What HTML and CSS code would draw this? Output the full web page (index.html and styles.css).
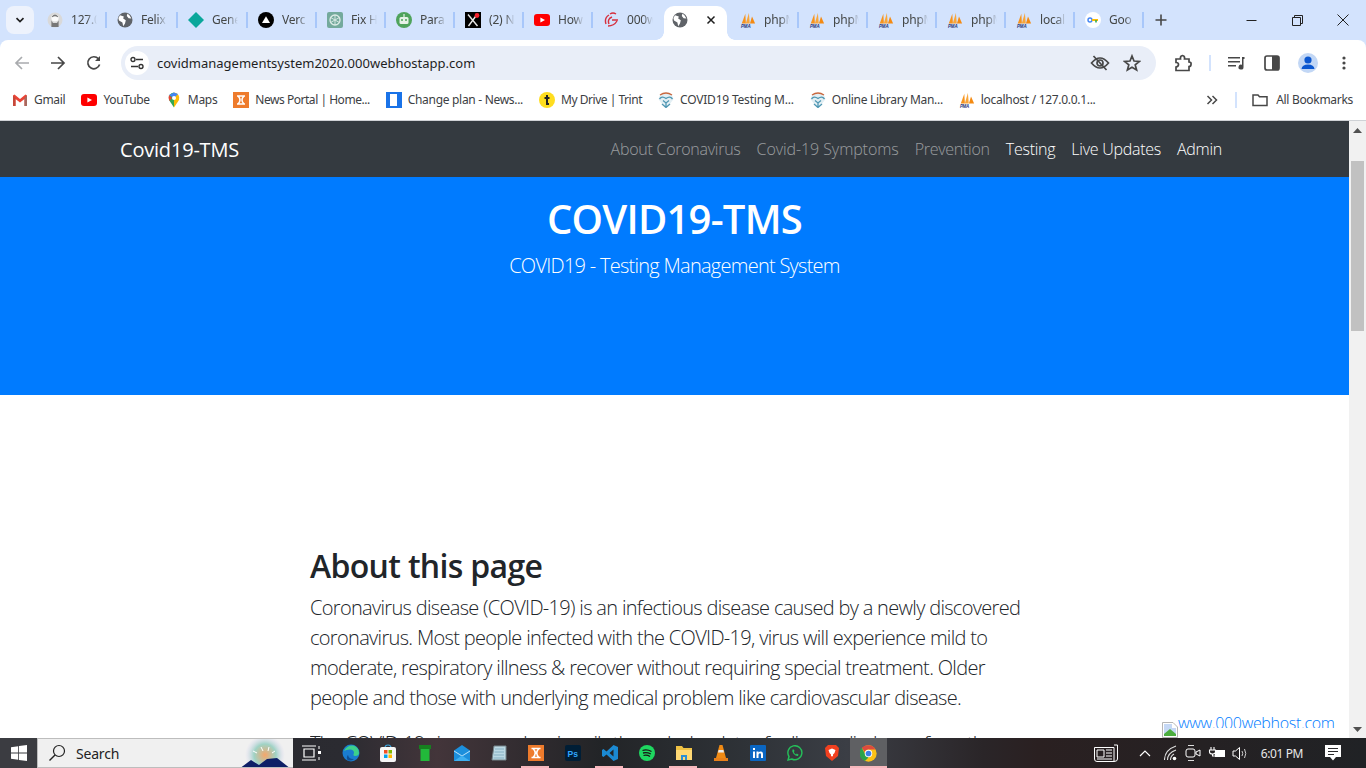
FILE: index.html
```html
<!DOCTYPE html>
<html lang="en">
<head>
<meta charset="utf-8">
<title>Covid19-TMS</title>
<link rel="stylesheet" href="styles.css">
</head>
<body>
<svg class="defs" width="0" height="0" aria-hidden="true">
  <symbol id="globe" viewBox="0 0 16 16"><circle cx="8" cy="8" r="7.500" fill="#5f6368"/><path d="M3 3.200 6.800 4.400 6.200 6.600 8.800 8.200 8 11.400 6.200 14.200 5.400 10.600 2 8.400 1.400 6Z M10.400 1.600 12.600 3.400 14.400 6.400 11.600 6.200 9.800 4Z" fill="#fff"/></symbol>
  <symbol id="pma" viewBox="0 0 18 18"><path d="M2 13 6 2 6.600 13Z" fill="#f7941d"/><path d="M6.500 13 10 1 11 13Z" fill="#f9a63a"/><path d="M11.200 13 13.500 5 17 13Z" fill="#f48a12"/><text x="1" y="17.600" class="pma-text">PMA</text></symbol>
  <symbol id="shield" viewBox="0 0 16 16"><path d="M2 3Q8 -1 14 3L15.500 7 12 12 8 16 4 12 .5 7Z" fill="#e3eff4"/><path d="M2 3Q8 -1 14 3" fill="none" stroke="#c9683f" stroke-width="1.300"/><path d="M1.500 7Q4 3.500 8 6.500Q12 3.500 14.500 7M5 8.500 8 11 11 8.500M8 11V15.500M4 12 8 15.500 12 12" fill="none" stroke="#4f97b3" stroke-width="1.300"/></symbol>
</svg>
<div class="screen">
  <header class="tabstrip">
    <button class="tab-search"><svg width="12" height="12" viewBox="0 0 12 12"><path d="M2.500 4.200 6 7.600 9.500 4.200" fill="none" stroke="#1f1f1f" stroke-width="1.700"/></svg></button>
    <div class="tabs">
      <div class="tab"><svg class="fav" viewBox="0 0 16 16"><circle cx="8" cy="8" r="7.500" fill="#d9d9d9"/><circle cx="8" cy="6" r="3.600" fill="#fbfbfb"/><path d="M4.400 15V8.500L6 11 10 11 11.600 8.500V15Z" fill="#777"/><path d="M4.800 4.400Q8 .6 11.200 4.400L10.600 5.200Q8 3.400 5.400 5.200Z" fill="#777"/></svg><span class="tab-title">127.0.0</span></div>
      <div class="tab"><svg class="fav"><use href="#globe"/></svg><span class="tab-title">Felix</span></div>
      <div class="tab"><svg class="fav" viewBox="0 0 16 16"><path d="M8 0 16 8 8 16 0 8Z" fill="#0aa79b"/></svg><span class="tab-title">Gene</span></div>
      <div class="tab"><svg class="fav" viewBox="0 0 16 16"><circle cx="8" cy="8" r="8" fill="#000"/><path d="M8 4.200 12 11H4Z" fill="#fff"/></svg><span class="tab-title">Verc</span></div>
      <div class="tab"><svg class="fav" viewBox="0 0 16 16"><rect width="16" height="16" rx="2" fill="#74aa9c"/><circle cx="8" cy="8" r="5" fill="none" stroke="#dcebe6" stroke-width="1.300"/><path d="M8 3V13M3.600 5.500 12.400 10.500M3.600 10.500 12.400 5.500" stroke="#dcebe6" stroke-width=".9"/></svg><span class="tab-title">Fix H</span></div>
      <div class="tab"><svg class="fav" viewBox="0 0 16 16"><circle cx="8" cy="8" r="8" fill="#4fa35c"/><rect x="3.500" y="5" width="9" height="7" rx="1.500" fill="#e6f2e7"/><circle cx="6" cy="8" r="1" fill="#4fa35c"/><circle cx="10" cy="8" r="1" fill="#4fa35c"/><path d="M8 5V2" stroke="#e6f2e7" stroke-width="1.200"/></svg><span class="tab-title">Para</span></div>
      <div class="tab"><svg class="fav" viewBox="0 0 16 16"><rect width="16" height="16" fill="#000"/><path d="M3 2.500 12.500 14M12 2.500 3.500 14" stroke="#e8e8e8" stroke-width="1.400"/><circle cx="12" cy="3.500" r="2.400" fill="#f4212e"/></svg><span class="tab-title">(2) New</span></div>
      <div class="tab"><svg class="fav" viewBox="0 0 16 16"><rect y="2" width="16" height="12" rx="3" fill="#f00"/><path d="M6.400 5.400 11 8 6.400 10.600Z" fill="#fff"/></svg><span class="tab-title">How</span></div>
      <div class="tab"><svg class="fav" viewBox="0 0 16 16"><path d="M3 12Q1 6 6 3M6 12Q4 7 9 5M5 14Q11 14 14 9M7 2Q10 0 13 2M9 8H15" fill="none" stroke="#d6303e" stroke-width="1.400"/></svg><span class="tab-title">000web</span></div>
      <div class="tab tab-active"><svg class="fav"><use href="#globe"/></svg><svg class="tab-close" width="10" height="10" viewBox="0 0 10 10"><path d="M1.500 1.500 8.500 8.500M8.500 1.500 1.500 8.500" stroke="#1f1f1f" stroke-width="1.500"/></svg></div>
      <div class="tab"><svg class="fav"><use href="#pma"/></svg><span class="tab-title">phpMy</span></div>
      <div class="tab"><svg class="fav"><use href="#pma"/></svg><span class="tab-title">phpMy</span></div>
      <div class="tab"><svg class="fav"><use href="#pma"/></svg><span class="tab-title">phpMy</span></div>
      <div class="tab"><svg class="fav"><use href="#pma"/></svg><span class="tab-title">phpMy</span></div>
      <div class="tab"><svg class="fav"><use href="#pma"/></svg><span class="tab-title">local</span></div>
      <div class="tab"><svg class="fav" viewBox="0 0 16 16"><circle cx="8" cy="8" r="8" fill="#fff"/><circle cx="5" cy="8" r="2" fill="none" stroke="#4285f4" stroke-width="1.400"/><path d="M7 8H13" stroke="#fbbc04" stroke-width="2"/><path d="M11 8V10.500" stroke="#34a853" stroke-width="1.600"/></svg><span class="tab-title">Goo</span></div>
    </div>
    <svg class="newtab" width="12" height="12" viewBox="0 0 12 12"><path d="M6 .5V11.500M.5 6H11.500" stroke="#474747" stroke-width="1.600"/></svg>
    <div class="winctl">
      <span class="winbtn"><svg width="11" height="11" viewBox="0 0 11 11"><path d="M.5 5.500H10.500" stroke="#222" stroke-width="1"/></svg></span>
      <span class="winbtn"><svg width="11" height="11" viewBox="0 0 11 11"><path d="M.5 2.500H8.500V10.500H.5ZM2.500 2.500V.5H10.500V8.500H8.500" fill="none" stroke="#222"/></svg></span>
      <span class="winbtn"><svg width="12" height="12" viewBox="0 0 12 12"><path d="M.5 .5 11.500 11.500M11.500 .5 .5 11.500" stroke="#222" stroke-width="1"/></svg></span>
    </div>
  </header>

  <div class="toolbar">
    <span class="tool"><svg width="16" height="16" viewBox="0 0 16 16"><path d="M15 8H2M8 2 2 8 8 14" fill="none" stroke="#a9abae" stroke-width="1.700"/></svg></span>
    <span class="tool"><svg width="16" height="16" viewBox="0 0 16 16"><path d="M1 8H14M8 2 14 8 8 14" fill="none" stroke="#474747" stroke-width="1.700"/></svg></span>
    <span class="tool"><svg width="16" height="16" viewBox="0 0 16 16"><path d="M13.600 9.600A6 6 0 1 1 12.400 3.800" fill="none" stroke="#474747" stroke-width="1.700"/><path d="M14 1V6H9Z" fill="#474747"/></svg></span>
    <div class="omnibox">
      <span class="tune"><svg width="14" height="14" viewBox="0 0 14 14"><path d="M6 3.500H13M1 10.500H8" stroke="#333" stroke-width="1.500"/><circle cx="3" cy="3.500" r="2" fill="none" stroke="#333" stroke-width="1.400"/><circle cx="11" cy="10.500" r="2" fill="none" stroke="#333" stroke-width="1.400"/></svg></span>
      <span class="url">covidmanagementsystem2020.000webhostapp.com</span>
      <svg class="omni-eye" width="20" height="18" viewBox="0 0 20 18"><path d="M1.500 9Q10 -1 18.500 9Q10 19 1.500 9Z" fill="none" stroke="#474747" stroke-width="1.700"/><circle cx="10" cy="9" r="3" fill="none" stroke="#474747" stroke-width="1.700"/><path d="M3.500 2 16.500 16" stroke="#474747" stroke-width="1.700"/></svg>
      <svg class="omni-star" width="18" height="18" viewBox="0 0 18 18"><path d="M9 2 11 7 16.400 7.400 12.200 10.800 13.600 16 9 13.200 4.400 16 5.800 10.800 1.600 7.400 7 7Z" fill="none" stroke="#474747" stroke-width="1.700"/></svg>
    </div>
    <svg class="t-ext" width="18" height="18" viewBox="0 0 18 18"><path d="M2 5H6.500Q6 2 8.500 1.500Q11 2 10.500 5H15V8Q17.500 8 17 10.500Q17 12.500 15 12.500V16.500H2V13Q4.500 12.500 4.500 10.500Q4.500 8.500 2 8.500Z" fill="none" stroke="#474747" stroke-width="1.700"/></svg>
    <span class="t-sep"></span>
    <svg class="t-media" width="18" height="16" viewBox="0 0 18 16"><path d="M1 2H13V3.600H1ZM1 6H13V7.600H1ZM1 10H9V11.600H1Z" fill="#474747"/><path d="M15 2H17.500V4H16.500V12A2.500 2.500 0 1 1 15 9.800Z" fill="#474747"/></svg>
    <svg class="t-side" width="16" height="16" viewBox="0 0 16 16"><rect x="1" y="1" width="14" height="14" rx="2" fill="none" stroke="#474747" stroke-width="1.700"/><rect x="8" y="1" width="7" height="14" fill="#474747"/></svg>
    <span class="avatar"><svg width="20" height="20" viewBox="0 0 20 20"><circle cx="10" cy="7" r="3.600" fill="#0b57d0"/><path d="M3.500 16Q4 11.500 10 11.500Q16 11.500 16.500 16Z" fill="#0b57d0"/></svg></span>
    <svg class="t-dots" width="4" height="14" viewBox="0 0 4 14"><circle cx="2" cy="2" r="1.600" fill="#474747"/><circle cx="2" cy="7" r="1.600" fill="#474747"/><circle cx="2" cy="12" r="1.600" fill="#474747"/></svg>
  </div>

  <nav class="bookmarks">
    <a class="bm"><svg class="fav" viewBox="0 0 16 16"><path d="M1 3.500V14H3.500V7L8 10.500 12.500 7V14H15V3.500L13.500 2.500 8 7 2.500 2.500Z" fill="#ea4335"/><path d="M1 14V3.500L3.500 6V14Z" fill="#c5483a"/><path d="M15 14V3.500L12.500 6V14Z" fill="#a6695f"/></svg><span>Gmail</span></a>
    <a class="bm"><svg class="fav" viewBox="0 0 16 16"><rect y="2" width="16" height="12" rx="3" fill="#f00"/><path d="M6.400 5.400 11 8 6.400 10.600Z" fill="#fff"/></svg><span>YouTube</span></a>
    <a class="bm"><svg class="fav" viewBox="0 0 16 16"><path d="M8 .5A5.500 5.500 0 0 1 13 8Q11 11 8 15.500Z" fill="#fbbc04"/><path d="M8 .5A5.500 5.500 0 0 0 3 8Q5 11 8 15.500Z" fill="#34a853"/><path d="M3 3 8 .5 12 2 8 6Z" fill="#4285f4"/><path d="M3 3 6 6 3.400 9Q2 6 3 3Z" fill="#ea4335"/><circle cx="8" cy="6" r="2" fill="#fff"/></svg><span>Maps</span></a>
    <a class="bm bm-tight"><svg class="fav" viewBox="0 0 16 16"><rect width="16" height="16" fill="#ee7b2c"/><path d="M4 4H12M4 12H12M5 4Q9 8 5 12M11 4Q7 8 11 12" fill="none" stroke="#fff" stroke-width="1.500"/></svg><span>News Portal | Home...</span></a>
    <a class="bm"><svg class="fav" viewBox="0 0 16 16"><rect width="16" height="16" fill="#1a73e8"/><rect x="4" y="2" width="7" height="12" fill="#fff"/></svg><span>Change plan - News...</span></a>
    <a class="bm bm-tight"><svg class="fav" viewBox="0 0 16 16"><circle cx="8" cy="8" r="8" fill="#ffdd1f"/><path d="M8 3V12H10M5.500 6H10.500" fill="none" stroke="#222" stroke-width="2"/></svg><span>My Drive | Trint</span></a>
    <a class="bm bm-wide"><svg class="fav"><use href="#shield"/></svg><span>COVID19 Testing M...</span></a>
    <a class="bm"><svg class="fav"><use href="#shield"/></svg><span>Online Library Man...</span></a>
    <a class="bm"><svg class="fav"><use href="#pma"/></svg><span>localhost / 127.0.0.1...</span></a>
    <svg class="bm-more" width="12" height="10" viewBox="0 0 12 10"><path d="M1.500 1 5.500 5 1.500 9M6.500 1 10.500 5 6.500 9" fill="none" stroke="#474747" stroke-width="1.500"/></svg>
    <span class="bm-sep"></span>
    <a class="bm bm-all"><svg class="fav" viewBox="0 0 16 16"><path d="M1 3H6L7.500 4.800H15V13.500H1Z" fill="none" stroke="#474747" stroke-width="1.500"/></svg><span>All Bookmarks</span></a>
  </nav>

  <div class="page">
    <main class="site">
      <div class="site-nav">
        <a class="brand">Covid19-TMS</a>
        <ul class="nav-links">
          <li class="dim">About Coronavirus</li>
          <li class="dim dim-wide">Covid-19 Symptoms</li>
          <li class="dim">Prevention</li>
          <li>Testing</li>
          <li>Live Updates</li>
          <li>Admin</li>
        </ul>
      </div>
      <section class="hero">
        <h1>COVID19-TMS</h1>
        <p>COVID19 - Testing Management System</p>
      </section>
      <section class="about">
        <h2>About this page</h2>
        <p>Coronavirus disease (COVID-19) is an infectious disease caused by a newly discovered<br>coronavirus. Most people infected with the COVID-19, virus will experience mild to<br>moderate, respiratory illness &amp; recover without requiring special treatment. Older<br>people and those with underlying medical problem like cardiovascular disease.</p>
        <p class="clipped">The COVID-19 virus spreads primarily through droplets of saliva or discharge from the</p>
      </section>
    </main>
    <aside class="scrollbar">
      <svg class="sb-arrow" width="9" height="5" viewBox="0 0 9 5"><path d="M4.500 0 9 5H0Z" fill="#505050"/></svg>
      <div class="sb-thumb"></div>
      <svg class="sb-arrow sb-down" width="9" height="5" viewBox="0 0 9 5"><path d="M4.500 5 9 0H0Z" fill="#505050"/></svg>
    </aside>
    <a class="hostbadge">
      <svg class="broken" width="16" height="16" viewBox="0 0 16 16"><path d="M.5 .5H11L15.500 5V15.500H.5Z" fill="#fff" stroke="#b5b5b5"/><path d="M2 2H10V6H14V14H2Z" fill="#c5d8f5"/><path d="M2 14V12L8 7 14 12V14Z" fill="#4cae3f"/></svg>
      <span class="hostlink">www.000webhost.com</span>
    </a>
  </div>

  <footer class="taskbar">
    <span class="start"><svg width="16" height="16" viewBox="0 0 16 16"><path d="M0 2.200 7.200 1.200V7.500H0ZM8 1 16 0V7.500H8ZM0 8.400H7.200V14.800L0 13.800ZM8 8.400H16V16L8 15Z" fill="#fff"/></svg></span>
    <div class="searchbox">
      <svg width="18" height="18" viewBox="0 0 18 18"><circle cx="11" cy="7" r="5.500" fill="none" stroke="#222" stroke-width="1.200"/><path d="M7 11 1.500 16.500" stroke="#222" stroke-width="1.400"/></svg>
      <span>Search</span>
      <svg class="doodle" width="52" height="30" viewBox="0 0 52 30"><defs><radialGradient id="glow"><stop offset="0" stop-color="#f5a66a"/><stop offset=".55" stop-color="#9fd3c5"/><stop offset="1" stop-color="#d9d4f2" stop-opacity="0"/></radialGradient></defs><circle cx="26" cy="16" r="20" fill="url(#glow)"/><path d="M0 30 12 21 20 26 28 20 38 19 52 30Z" fill="#0e1f66"/><path d="M14 12 18 14M22 8 24 12M30 8 29 12M36 12 33 14" stroke="#fff" stroke-width="1"/></svg>
    </div>
    <div class="apps">
      <span class="app"><svg width="22" height="16" viewBox="0 0 22 16"><path d="M1 1H15M1 15H15M3 4H13V12H3Z" fill="none" stroke="#fff" stroke-width="1.200"/><path d="M18 1V4M18 12V15" stroke="#fff"/><rect x="17" y="6" width="3" height="3" fill="#fff"/></svg></span>
      <span class="app"><svg width="18" height="18" viewBox="0 0 18 18"><circle cx="9" cy="9" r="8.500" fill="#1a7ccf"/><path d="M2 7Q5 1 11 1.500Q17 3 17 9Q17 12 13 12Q10.500 12 12 9Q12 5.500 8 5.500Q4 5.500 2 7Z" fill="#3dd08b"/><path d="M6 11Q7 15.500 12 15Q9 17.500 5.500 16Q4 13 6 11Z" fill="#0f4f94"/></svg></span>
      <span class="app"><svg width="16" height="18" viewBox="0 0 16 18"><path d="M5 4Q5 1 8 1Q11 1 11 4" fill="none" stroke="#3aa6e0" stroke-width="1.200"/><rect y="3" width="16" height="15" rx="2" fill="#f6f6f6"/><rect x="4" y="6" width="3.500" height="3.500" fill="#f25022"/><rect x="8.500" y="6" width="3.500" height="3.500" fill="#7fba00"/><rect x="4" y="10.500" width="3.500" height="3.500" fill="#00a4ef"/><rect x="8.500" y="10.500" width="3.500" height="3.500" fill="#ffb900"/></svg></span>
      <span class="app"><svg width="12" height="16" viewBox="0 0 12 16"><path d="M0 0H12V4H10.500V16H1.500V4H0Z" fill="#22b83a"/><path d="M0 0H12V4H0Z" fill="#16801f"/></svg></span>
      <span class="app"><svg width="16" height="16" viewBox="0 0 16 16"><path d="M0 5.500 8 0 16 5.500V16H0Z" fill="#1c8fdc"/><path d="M0 5.500 8 10.500 16 5.500V6.500L8 11.500 0 6.500Z" fill="#bfe4fa"/><path d="M0 16 8 10.500 16 16Z" fill="#3fb0f0"/></svg></span>
      <span class="app"><svg width="16" height="16" viewBox="0 0 16 16"><path d="M3 1H15V15H1Z" fill="#bcd9e4" stroke="#74848a"/><path d="M4 4H13M3.500 7H13M3 10H13M2.500 13H13" stroke="#7aa5b8" stroke-width=".8"/></svg></span>
      <span class="app"><svg width="16" height="16" viewBox="0 0 16 16"><rect width="16" height="16" fill="#ee7b2c"/><path d="M3.500 3.500H12.500M3.500 12.500H12.500M5 3.500Q9.500 8 5 12.500M11 3.500Q6.500 8 11 12.500" fill="none" stroke="#fff" stroke-width="1.500"/></svg></span>
      <span class="app"><svg width="16" height="16" viewBox="0 0 16 16"><rect width="16" height="16" rx="2" fill="#001e36"/><text x="2.500" y="11.500" class="ps-text">Ps</text></svg></span>
      <span class="app"><svg width="16" height="16" viewBox="0 0 16 16"><path d="M11.500 0 16 2V14L11.500 16 4.500 9.500 1.500 12 0 11V5L1.500 4 4.500 6.500ZM11.500 4.500 7.500 8 11.500 11.500Z" fill="#1b8ad3"/></svg></span>
      <span class="app"><svg width="16" height="16" viewBox="0 0 16 16"><circle cx="8" cy="8" r="8" fill="#1ed760"/><path d="M3.500 5.500Q8 4 12.500 6.500M4 8Q8 7 11.800 9M4.500 10.500Q8 9.500 11 11.500" fill="none" stroke="#191414" stroke-width="1.300"/></svg></span>
      <span class="app"><svg width="16" height="14" viewBox="0 0 16 14"><path d="M0 0H6L7.500 2H16V14H0Z" fill="#f0c244"/><path d="M0 4H16V14H0Z" fill="#ffd975"/><path d="M5 9H11V14H9V11H7V14H5Z" fill="#2d8fd5"/></svg></span>
      <span class="app"><svg width="14" height="16" viewBox="0 0 14 16"><path d="M5.500 0H8.500L12 13H2Z" fill="#f08a14"/><path d="M4.600 5H9.400L10 7.500H4Z" fill="#ececec"/><path d="M0 13H14V16H0Z" fill="#e8801a"/></svg></span>
      <span class="app"><svg width="16" height="16" viewBox="0 0 16 16"><rect width="16" height="16" rx="1" fill="#0a66c2"/><path d="M3 6.500H5V13H3ZM3 3H5V5H3ZM6.500 6.500H8.500V7.500Q10 5.800 12 6.800Q13 7.500 13 9V13H11V9.500Q11 8.300 10 8.300Q8.500 8.300 8.500 9.800V13H6.500Z" fill="#fff"/></svg></span>
      <span class="app"><svg width="16" height="16" viewBox="0 0 16 16"><path d="M1 15 2 11.500A7 7 0 1 1 4.800 14Z" fill="none" stroke="#25c05a" stroke-width="1.400"/><path d="M5.500 4.500Q4.500 6 6.500 8.800Q9 11.500 11 11L11.500 9.500 9.800 8.600 9 9.500Q7.500 8.800 6.800 7L7.500 6 6.800 4.500Z" fill="#25c05a"/></svg></span>
      <span class="app"><svg width="14" height="16" viewBox="0 0 14 16"><path d="M3 0H11L14 3 13 11 7 16 1 11 0 3Z" fill="#f1401f"/><path d="M3.500 5 7 3.500 10.500 5 9.500 8 8 9.500V11L7 11.500 6 11V9.500L4.500 8Z" fill="#fff"/></svg></span>
      <span class="app app-open"><svg width="17" height="17" viewBox="0 0 48 48"><circle cx="24" cy="24" r="23" fill="#fbc116"/><path d="M24 1A23 23 0 0 1 44 13H24A11 11 0 0 0 13.500 20L5 8A23 23 0 0 1 24 1Z" fill="#dd4b3e"/><path d="M5 8 15 27 24 35 14 45A23 23 0 0 1 5 8Z" fill="#2ca24c"/><circle cx="24" cy="24" r="10.500" fill="#fff"/><circle cx="24" cy="24" r="8" fill="#3d7fe6"/></svg></span>
    </div>
    <div class="tray">
      <svg class="tray-news" width="24" height="18" viewBox="0 0 24 18"><path d="M.5 3.500H20V17.500H3Q.5 17.500 .5 15ZM20 1H23.500V15Q23.500 17.500 20 17.500" fill="none" stroke="#fff"/><path d="M3 6H10V13H3ZM12 6H18M12 9H18M12 12H18M3 15H18" fill="none" stroke="#fff"/></svg>
      <svg class="tray-caret" width="12" height="8" viewBox="0 0 12 8"><path d="M1 7 6 2 11 7" fill="none" stroke="#fff" stroke-width="1.200"/></svg>
      <svg class="tray-wifi" width="13" height="16" viewBox="0 0 13 16"><path d="M.5 15Q.5 5 12 1M3.500 15Q3.500 8 12 5M6.500 15Q6.500 11 10 9" fill="none" stroke="#ddd" stroke-width="1.100"/><circle cx="10.500" cy="13.500" r="1.800" fill="#fff"/></svg>
      <svg class="tray-cam" width="16" height="18" viewBox="0 0 16 18"><path d="M3 1.500H9M3 16.500H9" stroke="#ddd"/><rect x="1" y="5" width="9" height="8" rx="2" fill="none" stroke="#fff"/><path d="M11 8 15 6V12L11 10Z" fill="none" stroke="#fff"/></svg>
      <svg class="tray-batt" width="18" height="12" viewBox="0 0 18 12"><path d="M3 0V3M6 0V3M1.500 3H7.500V5Q7.500 7 4.500 7Q1.500 7 1.500 5ZM4.500 7V9H7" fill="none" stroke="#fff" stroke-width="1.100"/><rect x="7" y="3" width="10" height="7" fill="#fff"/></svg>
      <svg class="tray-vol" width="17" height="15" viewBox="0 0 17 15"><path d="M1 5H3.500L7.500 1.500V13.500L3.500 10H1Z" fill="none" stroke="#fff"/><path d="M10 5Q11.500 7.500 10 10M12.500 3Q15 7.500 12.500 12" fill="none" stroke="#ccc"/></svg>
      <span class="clock">6:01 PM</span>
      <svg class="tray-note" width="16" height="16" viewBox="0 0 16 16"><path d="M0 0H16V12H11L8 15.500 5 12H0Z" fill="#fff"/><path d="M3 3.500H13M3 6.500H13M3 9.500H9" stroke="#2a2a2c"/></svg>
    </div>
  </footer>
</div>
</body>
</html>
```

FILE: styles.css
```css
* { box-sizing: border-box; }
html, body { margin: 0; padding: 0; height: 100%; overflow: hidden; }
body { font-family: "Noto Sans", "Liberation Sans", sans-serif; background: #fff; }
.defs { position: absolute; }
.pma-text { font: italic 700 5px "Liberation Sans", sans-serif; fill: #26367a; }
.ps-text { font: 700 8.500px "Liberation Sans", sans-serif; fill: #31a8ff; }
.screen { width: 1366px; height: 768px; display: flex; flex-direction: column; background: #d3e3fd; }

/* tab strip */
.tabstrip { height: 40px; flex: none; background: #d3e3fd; display: flex; align-items: flex-start; }
.tab-search { width: 28px; height: 28px; margin: 6px 4px 0 6px; border: 0; padding: 0; border-radius: 8px; background: #edf2fc; display: flex; align-items: center; justify-content: center; }
.tabs { display: flex; height: 40px; }
.tab { width: 69px; height: 40px; padding: 12px 0 0 9px; display: flex; align-items: flex-start; gap: 8px; position: relative; font-size: 12px; line-height: 16px; color: #444746; }
.tab:nth-child(-n+3) { width: 70px; }
.tab:nth-child(2) { width: 71px; }
.tab::after { content: ""; position: absolute; right: 1px; top: 12px; width: 2px; height: 16px; background: #a8c7fa; }
.tab:nth-child(9)::after { display: none; }
.fav { width: 16px; height: 16px; flex: none; }
.tab-title { width: 26px; overflow: hidden; white-space: nowrap; letter-spacing: -.2px; -webkit-mask-image: linear-gradient(90deg, #000 60%, transparent); mask-image: linear-gradient(90deg, #000 60%, transparent); }
.tab-active { width: 63px; margin: 6px 4px 0 1px; height: 34px; padding: 6px 0 0 8px; background: #fff; border-radius: 10px 10px 0 0; gap: 0; }
.tab-active.tab::before, .tab-active.tab::after { content: ""; position: absolute; top: auto; bottom: 0; width: 8px; height: 8px; }
.tab-active.tab::before { left: -8px; background: radial-gradient(circle at 0 0, transparent 7.500px, #fff 8px); }
.tab-active.tab::after { right: -8px; background: radial-gradient(circle at 100% 0, transparent 7.500px, #fff 8px); }
.tab-close { margin: 3px 0 0 18px; }
.newtab { margin: 14px 0 0 10px; }
.winctl { margin-left: auto; display: flex; }
.winbtn { width: 46px; height: 40px; display: flex; align-items: center; justify-content: center; }

/* toolbar */
.toolbar { height: 42px; flex: none; background: #fff; border-radius: 8px 8px 0 0; display: flex; align-items: center; padding: 4px 0 0 4px; }
.tool { width: 36px; height: 34px; display: flex; align-items: center; justify-content: center; }
.omnibox { width: 1035px; height: 34px; margin-left: 9px; border-radius: 17px; background: #e9eef8; display: flex; align-items: center; padding-left: 4px; }
.tune { width: 24px; height: 24px; border-radius: 50%; background: #fff; display: flex; align-items: center; justify-content: center; flex: none; }
.url { margin-left: 8px; font-size: 13px; color: #1f1f1f; white-space: nowrap; }
.omni-eye { margin-left: auto; }
.omni-star { margin: 0 15px 0 13px; }
.t-ext { margin-left: 18px; }
.t-sep { width: 2px; height: 16px; margin-left: 17px; background: #d3e3fd; }
.t-media { margin-left: 16px; }
.t-side { margin-left: 19px; }
.avatar { width: 20px; height: 20px; margin-left: 18px; border-radius: 50%; background: #c2d7f5; overflow: hidden; }
.avatar svg { display: block; }
.t-dots { margin-left: 24px; }

/* bookmarks */
.bookmarks { height: 39px; flex: none; background: #fff; border-bottom: 1px solid #cfd2d6; display: flex; align-items: center; padding: 0 0 3px 12px; }
.bm { display: flex; align-items: center; gap: 6px; margin-right: 16px; font-size: 12px; color: #3c4043; letter-spacing: -.3px; white-space: nowrap; }
.bm-tight { letter-spacing: -.47px; }
.bm-wide { letter-spacing: -.2px; }
.bm-more { margin-left: auto; }
.bm-sep { width: 2px; height: 16px; margin: 0 15px 0 17px; background: #d3e3fd; }
.bm-all { margin-right: 13px; gap: 8px; }

/* page */
.page { flex: 1; min-height: 0; display: flex; position: relative; overflow: hidden; background: #fff; }
.site { flex: 1; min-width: 0; font-family: "Open Sans", "Noto Sans", sans-serif; font-weight: 300; color: #212529; overflow: hidden; background: #fff; }
.site-nav { height: 56px; background: #343a40; padding: 0 127px 0 120px; display: flex; align-items: center; justify-content: space-between; }
.brand { font-size: 20px; font-weight: 400; color: #fff; letter-spacing: -.2px; }
.nav-links { list-style: none; margin: 0; padding: 0; display: flex; gap: 16px; font-size: 16px; color: #fff; letter-spacing: -.26px; }
.dim { color: rgba(255,255,255,.5); }
.dim-wide { letter-spacing: -.08px; }
.hero { height: 218px; background: #007bff; color: #fff; text-align: center; padding-top: 18px; }
.hero h1 { margin: 0 0 8px; font-size: 40px; line-height: 48px; font-weight: 600; letter-spacing: -.75px; }
.hero p { margin: 0; font-size: 20px; line-height: 30px; letter-spacing: -.73px; }
.about { padding: 152px 0 0 310px; }
.about h2 { margin: 0 0 8px; font-size: 32px; line-height: 38px; font-weight: 600; letter-spacing: -.67px; }
.about p { margin: 0 0 16px; font-size: 20px; line-height: 30px; letter-spacing: -.68px; white-space: nowrap; }
.about .clipped { height: 9px; overflow: hidden; letter-spacing: -1px; }
.scrollbar { width: 17px; flex: none; background: #f1f1f1; display: flex; flex-direction: column; align-items: center; padding-top: 7px; }
.sb-thumb { width: 13px; height: 170px; margin-top: 28px; background: #c1c1c1; }
.sb-down { margin-top: auto; margin-bottom: 6px; }
.hostbadge { position: absolute; left: 1162px; top: 595px; display: flex; color: #007bff; font: 300 16px "Open Sans", sans-serif; }
.broken { margin-top: 6px; flex: none; }
.hostlink { height: 12px; line-height: 15px; overflow: hidden; white-space: nowrap; letter-spacing: -.32px; }

/* taskbar */
.taskbar { height: 30px; flex: none; display: flex; color: #fff; background: linear-gradient(90deg, #26272b 0, #2b2b31 25%, #43353a 32%, #222427 44%, #2f3338 55%, #3b3e45 62%, #2a2528 72%, #2a2021 76%, #202225 100%); }
.start { width: 37px; display: flex; align-items: center; justify-content: center; background: #3b3c41; }
.searchbox { width: 256px; display: flex; align-items: center; gap: 10px; padding-left: 10px; background: #f0f0f0; border: 1px solid #bdbdbd; border-width: 1px 0 1px 1px; color: #222; font: 400 14px "Noto Sans", sans-serif; letter-spacing: -.2px; position: relative; overflow: hidden; }
.doodle { position: absolute; right: 2px; top: 0; }
.apps { display: flex; }
.app { width: 37px; display: flex; align-items: center; justify-content: center; position: relative; }
.app:first-child { width: 39px; padding-right: 2px; }
.app:nth-child(7)::after, .app:nth-child(9)::after, .app:nth-child(11)::after, .app-open::after { content: ""; position: absolute; left: 4px; right: 5px; bottom: 0; height: 2px; background: #f6b7bc; }
.app-open { background: #5f6063; }
.app-open::after { left: 0; right: 0; }
.tray { margin-left: auto; display: flex; align-items: center; padding-right: 25px; }
.tray-caret { margin-left: 21px; }
.tray-wifi { margin-left: 13px; }
.tray-cam { margin-left: 8px; }
.tray-batt { margin-left: 7px; }
.tray-vol { margin-left: 6px; }
.clock { margin-left: 12px; font: 400 12px "Noto Sans", sans-serif; color: #e8e8e8; letter-spacing: -.4px; }
.tray-note { margin-left: 22px; }
```
